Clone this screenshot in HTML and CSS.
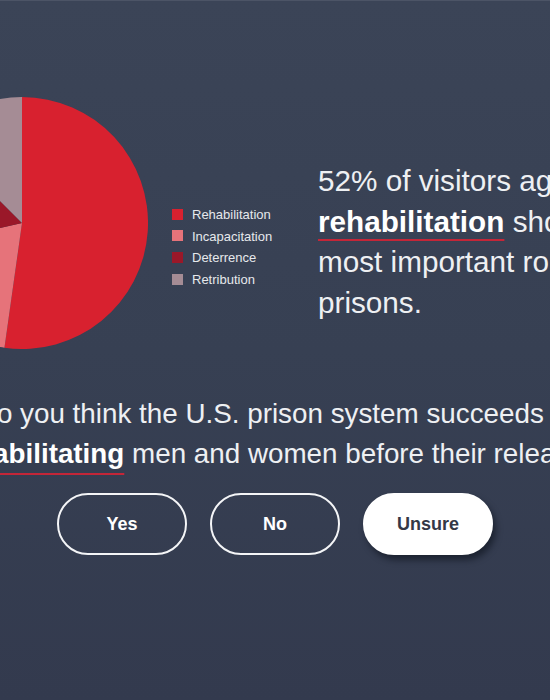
FILE: index.html
```html
<!DOCTYPE html>
<html lang="en">
<head>
<meta charset="utf-8">
<title>Prison rehabilitation poll</title>
<link rel="stylesheet" href="styles.css">
</head>
<body>
<main class="stage">
  <section class="results">
    <svg class="pie" width="252" height="252" viewBox="0 0 252 252" aria-label="Pie chart of visitor answers">
      <path d="M126 126 L126 0 A126 126 0 1 1 108.46 250.77 Z" fill="#d8212f"/>
      <path d="M126 126 L108.46 250.77 A126 126 0 0 1 3.23 154.35 Z" fill="#e6737a"/>
      <path d="M126 126 L3.23 154.35 A126 126 0 0 1 36.9 36.9 Z" fill="#9a1829"/>
      <path d="M126 126 L36.9 36.9 A126 126 0 0 1 126 0 Z" fill="#a58c95"/>
    </svg>
    <ul class="legend">
      <li class="legend-item"><span class="swatch swatch-rehab"></span>Rehabilitation</li>
      <li class="legend-item"><span class="swatch swatch-incap"></span>Incapacitation</li>
      <li class="legend-item"><span class="swatch swatch-deter"></span>Deterrence</li>
      <li class="legend-item"><span class="swatch swatch-retri"></span>Retribution</li>
    </ul>
    <p class="finding">52% of visitors agree that<br><strong class="mark">rehabilitation</strong> should be the<br>most important role of<br>prisons.</p>
  </section>
  <h1 class="question">Do you think the U.S. prison system succeeds in<br><strong class="mark mark-q">rehabilitating</strong> men and women before their release?</h1>
  <div class="answers">
    <button class="answer">Yes</button>
    <button class="answer">No</button>
    <button class="answer answer-selected">Unsure</button>
  </div>
</main>
</body>
</html>
```
FILE: styles.css
```css
html {
  background: linear-gradient(180deg, #3b4457 0%, #374053 50%, #333a4e 100%);
  height: 100%;
}
body {
  margin: 0;
  height: 700px;
  overflow: hidden;
  border-top: 1px solid #4c5466;
  box-sizing: border-box;
  font-family: "Liberation Sans", Arial, Helvetica, sans-serif;
  color: #eef0f3;
}
.stage {
  padding-top: 96px;
}
.results {
  display: flex;
  align-items: flex-start;
  margin-left: -104px;
}
.pie {
  flex: none;
  display: block;
}
.legend {
  list-style: none;
  margin: 110px 0 0 24px;
  padding: 0;
  width: 100px;
  flex: none;
  display: flex;
  flex-direction: column;
  gap: 5.7px;
}
.legend-item {
  display: flex;
  align-items: center;
  font-size: 13px;
  line-height: 16px;
  color: #e6e8ec;
}
.swatch {
  width: 11px;
  height: 11px;
  margin-right: 9px;
  margin-top: -2px;
  flex: none;
}
.swatch-rehab { background: #d8212f; }
.swatch-incap { background: #e6737a; }
.swatch-deter { background: #9a1829; }
.swatch-retri { background: #a58c95; }
.finding {
  flex: none;
  margin: 64px 0 0 46px;
  font-size: 29.7px;
  line-height: 40.5px;
  white-space: nowrap;
  font-weight: normal;
}
.mark {
  font-weight: bold;
  color: #ffffff;
  text-decoration: underline;
  text-decoration-color: #c42638;
  text-decoration-thickness: 2px;
  text-underline-offset: 7px;
  text-decoration-skip-ink: none;
}
.mark-q {
  text-underline-offset: 10px;
}
.question {
  margin: 45px -200px 0;
  text-align: center;
  white-space: nowrap;
  font-size: 27.8px;
  line-height: 39.5px;
  font-weight: normal;
}
.answers {
  display: flex;
  justify-content: center;
  gap: 23px;
  margin-top: 20px;
}
.answer {
  width: 130px;
  height: 62px;
  border-radius: 31px;
  border: 2px solid #f4f5f7;
  background: transparent;
  color: #ffffff;
  font-family: "Liberation Sans", Arial, Helvetica, sans-serif;
  font-weight: bold;
  font-size: 18px;
  padding: 0;
}
.answer-selected {
  background: #ffffff;
  border-color: #ffffff;
  color: #343846;
  box-shadow: 3px 5px 6px rgba(10, 14, 24, 0.55);
}
```
